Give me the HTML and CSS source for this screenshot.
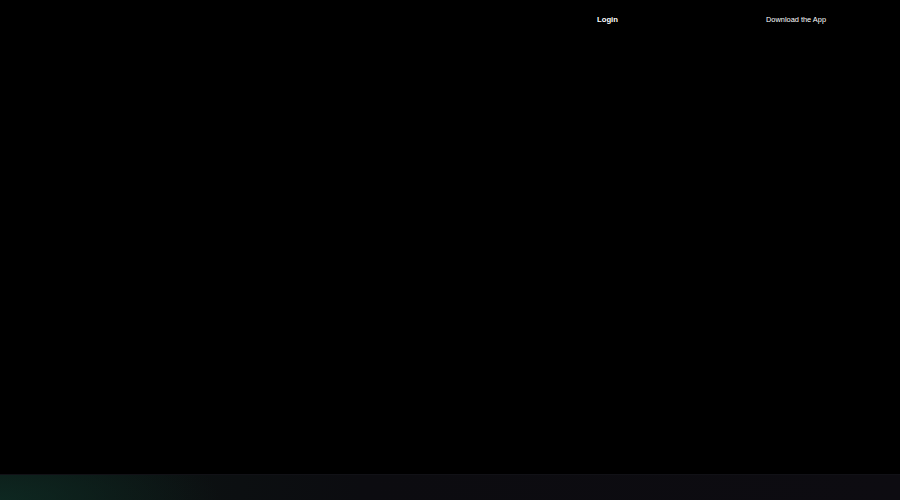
FILE: index.html
```html
<!DOCTYPE html>
<html>
	<head>
		<meta charset="utf-8"/>
		<meta name="viewport" content="width=device-width"/>
		<link rel="stylesheet" href="styles.css">
	</head>
	<body>
		<div class="page">
			<div class="header">
				<a class="login" href="#">Login</a>
				<a class="download" href="#">Download the App</a>
			</div>
			<div class="main"></div>
			<div class="footer"></div>
		</div>
	</body>
</html>
```

FILE: styles.css
```css
body{
	margin:0;
	background-color:#000;
	font-family:"Liberation Sans",Arial,sans-serif;
}
.page{
	height:100vh;
	display:flex;
	flex-direction:column;
}
.header{
	display:flex;
	align-items:center;
	height:39px;
	padding-left:597px;
}
.header a{
	color:#fff;
	text-decoration:none;
}
.login{
	font-size:7.7px;
	font-weight:bold;
	width:169px;
}
.download{
	font-size:7.4px;
	color:#e8e8e8;
}
.main{
	flex-grow:1;
}
.footer{
	height:25px;
	border-top:1px solid #111116;
	background:radial-gradient(ellipse 220px 70px at 0 100%,rgba(14,44,36,0.8),rgba(14,44,36,0) 100%),
		linear-gradient(90deg,#0c1513 0%,#0c0c10 40%,#0d0c11 100%);
}
```
